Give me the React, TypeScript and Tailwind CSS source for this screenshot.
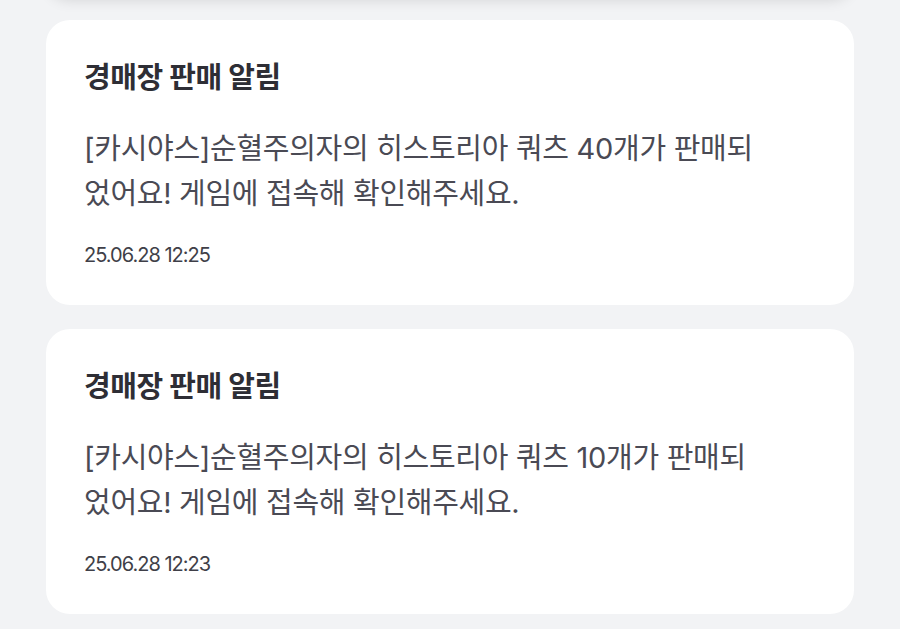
import React from "react";

type Notice = {
  title: string;
  lines: string[];
  date: string;
};

const notices: Notice[] = [
  {
    title: "경매장 판매 알림",
    lines: ["[카시야스]순혈주의자의 히스토리아 쿼츠 40개가 판매되", "었어요! 게임에 접속해 확인해주세요."],
    date: "25.06.28 12:25",
  },
  {
    title: "경매장 판매 알림",
    lines: ["[카시야스]순혈주의자의 히스토리아 쿼츠 10개가 판매되", "었어요! 게임에 접속해 확인해주세요."],
    date: "25.06.28 12:23",
  },
];

function NoticeCard({ notice }: { notice: Notice }) {
  return (
    <div className="bg-white rounded-[24px] pl-[38px] pr-[38px] pt-[40px] pb-[36px]">
      <h4 className="text-[29px] leading-[36px] font-bold text-[#2e2e35] tracking-[-0.4px]">{notice.title}</h4>
      <p className="mt-[30px] text-[29px] leading-[45px] text-[#4a4a54] tracking-[-0.3px]">
        {notice.lines.map((l, i) => (
          <span key={i} className="block whitespace-nowrap">
            {l}
          </span>
        ))}
      </p>
      <div className="mt-[25px] text-[20px] leading-[28px] text-[#3f3f48] tracking-[-1px]">{notice.date}</div>
    </div>
  );
}

export default function App() {
  return (
    <div
      className="min-h-screen h-[629px] overflow-hidden bg-[#f2f3f5] px-[46px]"
      style={{ fontFamily: "Inter, 'Noto Sans CJK KR', sans-serif" }}
    >
      <div className="flex flex-col gap-[24px]">
        <div className="-mt-[104px] h-[100px] bg-white rounded-[24px] shadow-[0_4px_14px_rgba(0,0,0,0.13)]" />
        {notices.map((n, i) => (
          <NoticeCard key={i} notice={n} />
        ))}
      </div>
    </div>
  );
}
